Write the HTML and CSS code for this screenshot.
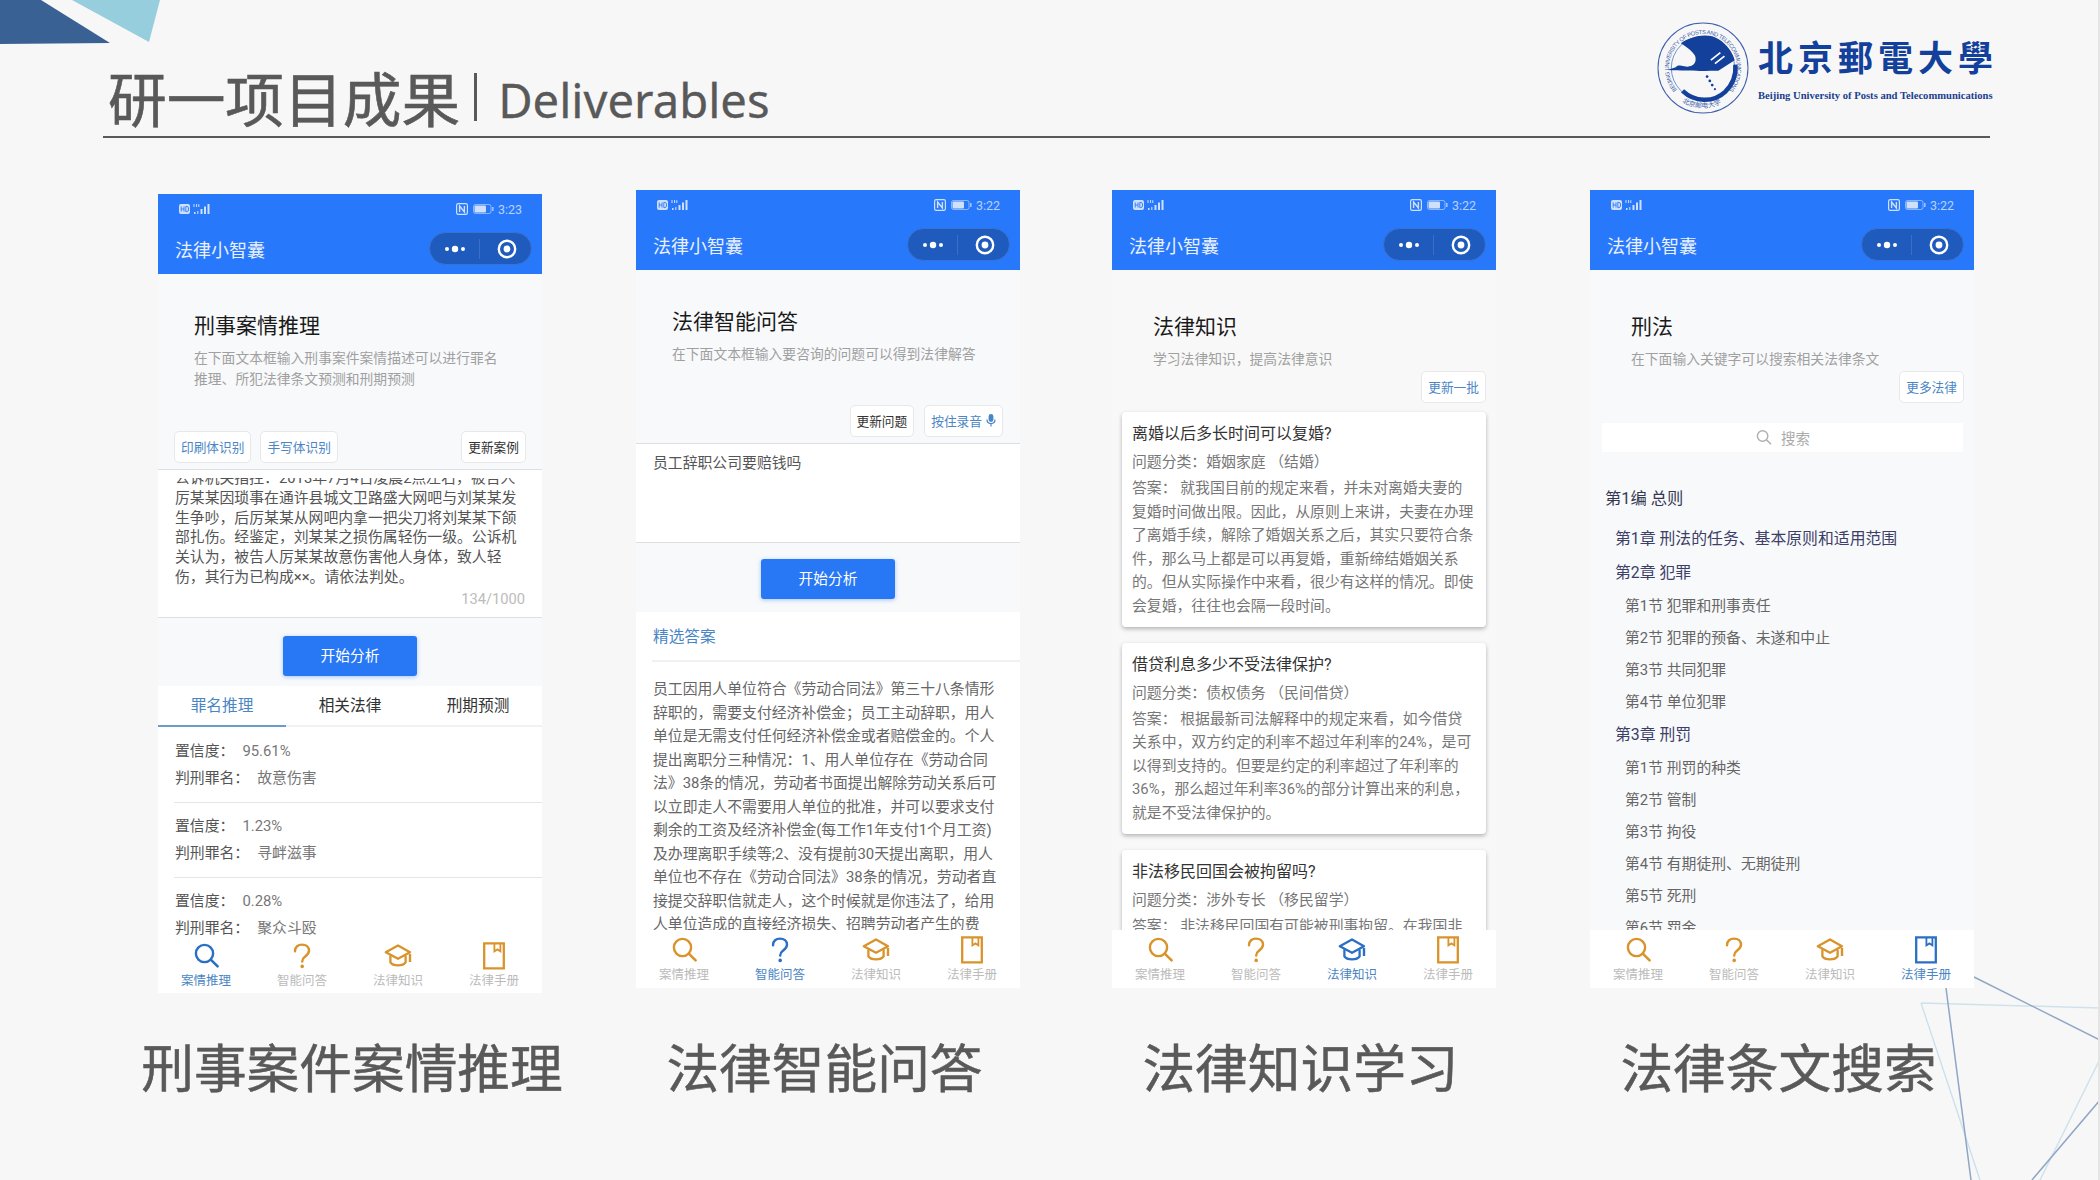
FILE: index.html
```html
<!DOCTYPE html>
<html lang="zh-CN">
<head>
<meta charset="UTF-8">
<meta name="viewport" content="width=device-width, initial-scale=1.0">
<title>研一项目成果 Deliverables</title>
<link rel="stylesheet" href="styles.css">
</head>
<body>
<svg class="icon-defs" xmlns="http://www.w3.org/2000/svg">
    <symbol id="i-search" viewBox="0 0 28 28">
        <circle cx="12.5" cy="11.5" r="8.6" fill="none" stroke="currentColor" stroke-width="2.4"/>
        <path d="M18.8 17.6 L25.6 24.4" fill="none" stroke="currentColor" stroke-width="2.6" stroke-linecap="round"/>
    </symbol>
    <symbol id="i-help" viewBox="0 0 28 28">
        <path d="M7 9.2 C7 4.8 10.2 2.6 14 2.6 C18 2.6 21 5 21 8.8 C21 12 18.8 13.4 16.6 15 C15 16.2 14.2 17.2 14.2 19.6" fill="none" stroke="currentColor" stroke-width="2.4" stroke-linecap="round"/>
        <circle cx="14.2" cy="24.4" r="1.8" fill="currentColor"/>
    </symbol>
    <symbol id="i-cap" viewBox="0 0 28 28">
        <path d="M14 3.4 L26 10.2 L14 16.8 L1.8 10.2 Z" fill="none" stroke="currentColor" stroke-width="2.3" stroke-linejoin="round"/>
        <path d="M6.4 13.4 V20.4 C9 24.4 19 24.4 21.6 20.4 V13.4" fill="none" stroke="currentColor" stroke-width="2.3"/>
        <path d="M26 12 V20" fill="none" stroke="currentColor" stroke-width="2.4"/>
    </symbol>
    <symbol id="i-book" viewBox="0 0 28 28">
        <path d="M4.2 1.4 H23.8 V26.4 H4.2 Z" fill="none" stroke="currentColor" stroke-width="2.3"/>
        <path d="M14.4 1.4 V9.4 L17.4 7.4 L20.4 9.4 V1.4" fill="none" stroke="currentColor" stroke-width="1.8"/>
    </symbol>
    <symbol id="i-status-left" viewBox="0 0 34 12">
        <rect x="0" y="1" width="11" height="10" rx="2" fill="#cfe0fd"/>
        <path d="M2.2 3.4 V8.6 M5 3.4 V8.6 M2.2 6 H5 M6.8 3.4 V8.6 H8 Q9.6 8.6 9.6 6 Q9.6 3.4 8 3.4 Z" fill="none" stroke="#2a78fb" stroke-width="0.9"/>
        <path d="M15 1 V4 M17.6 1 V4 M19.8 1.2 V4" stroke="#cfe0fd" stroke-width="1"/>
        <rect x="15" y="9" width="1.5" height="2" fill="#cfe0fd"/>
        <rect x="18" y="8" width="1.5" height="3" fill="#cfe0fd" opacity=".7"/>
        <rect x="21.5" y="6" width="2" height="5" fill="#cfe0fd"/>
        <rect x="25" y="3.5" width="2" height="7.5" fill="#cfe0fd"/>
        <rect x="28.5" y="1" width="2" height="10" fill="#cfe0fd"/>
    </symbol>
    <symbol id="i-nfc" viewBox="0 0 12 12">
        <rect x="0.6" y="0.6" width="10.8" height="10.8" rx="1.6" fill="none" stroke="#cfe0fd" stroke-width="1.2"/>
        <path d="M3.6 9 V3 L8.4 9 V3" fill="none" stroke="#cfe0fd" stroke-width="1.4"/>
    </symbol>
    <symbol id="i-battery" viewBox="0 0 21 10">
        <rect x="0.5" y="0.5" width="17.5" height="9" rx="2" fill="none" stroke="#cfe0fd" stroke-opacity=".6"/>
        <rect x="1.5" y="1.5" width="11.5" height="7" rx="1" fill="#cfe0fd"/>
        <rect x="19" y="3" width="1.6" height="4" fill="#cfe0fd" opacity=".7"/>
    </symbol>
    <symbol id="i-more" viewBox="0 0 22 8">
        <circle cx="3" cy="4" r="2" fill="#fff"/>
        <circle cx="11" cy="4" r="3.2" fill="#fff"/>
        <circle cx="19" cy="4" r="2" fill="#fff"/>
    </symbol>
    <symbol id="i-target" viewBox="0 0 20 20">
        <circle cx="10" cy="10" r="8.2" fill="none" stroke="#fff" stroke-width="2.4"/>
        <circle cx="10" cy="10" r="3.4" fill="#fff"/>
    </symbol>
    <symbol id="i-mic" viewBox="0 0 10 14">
        <rect x="2.6" y="1" width="4.8" height="8" rx="2.4" fill="currentColor"/>
        <path d="M1 6.6 C1 12 9 12 9 6.6 M5 11 V13.4" fill="none" stroke="currentColor" stroke-width="1.2"/>
    </symbol>
</svg>

<div class="slide">
    <div class="corner-dark"></div>
    <div class="corner-light"></div>
    <svg class="deco-lines" viewBox="0 0 2100 1180" xmlns="http://www.w3.org/2000/svg">
        <path d="M1921 1003 L2100 1008 M1921 1003 L1980 1180 M2100 1059 L2040 1180" fill="none" stroke="#cfe2ec" stroke-width="1.5"/>
        <path d="M1974 977 L2100 1040 M1946 988 L1971 1180 M2100 1100 L2032 1180" fill="none" stroke="#8fa6c6" stroke-width="1.5"/>
        <rect x="2098" y="0" width="2" height="1180" fill="#e4e4e4"/>
    </svg>

    <header class="head">
        <h1 class="head-title">研一项目成果<span class="head-bar"></span><span class="head-en">Deliverables</span></h1>
        <div class="logo">
            <svg class="logo-seal" viewBox="0 0 270 270" xmlns="http://www.w3.org/2000/svg">
                <defs>
                    <path id="seal-top" d="M58.4 199.3 A100 100 0 1 1 211.6 199.3"/>
                    <path id="seal-bottom" d="M69 232 A118 118 0 0 0 201 232"/>
                </defs>
                <circle cx="135" cy="135" r="132" fill="none" stroke="#3f5fae" stroke-width="3"/>
                <circle cx="135" cy="135" r="93" fill="none" stroke="#3f5fae" stroke-width="2"/>
                <text class="seal-text"><textPath href="#seal-top" textLength="454">BEIJING UNIVERSITY OF POSTS AND TELECOMMUNICATIONS</textPath></text>
                <text class="seal-text-zh"><textPath href="#seal-bottom" startOffset="6">北京邮电大学</textPath></text>
                <path d="M70 62 C100 42 150 30 180 50 C205 65 222 90 228 112 L180 143 C150 143 115 145 30 141 L55 133 C60 124 70 128 80 130 C105 135 118 120 112 100 C105 85 85 72 70 62 Z" fill="#12409a"/>
                <path d="M158 112 L186 90 M170 122 L198 100" stroke="#fff" stroke-width="5"/>
                <path d="M75 202 C110 235 165 238 200 205 C225 180 232 150 230 125" fill="none" stroke="#12409a" stroke-width="13"/>
                <circle cx="147" cy="160" r="4" fill="#12409a"/>
                <circle cx="155" cy="173" r="4" fill="#12409a"/>
                <circle cx="162" cy="185" r="4" fill="#12409a"/>
                <circle cx="170" cy="197" r="3" fill="#12409a"/>
            </svg>
            <div class="logo-text">
                <div class="logo-zh">北京郵電大學</div>
                <div class="logo-en">Beijing University of Posts and Telecommunications</div>
            </div>
        </div>
    </header>

    <main class="columns">

        <!-- 刑事案件 -->
        <section class="col col-case">
            <div class="phone phone-case">
                <div class="appbar">
                    <div class="statusbar">
                        <svg class="st-left"><use href="#i-status-left"/></svg>
                        <svg class="st-nfc"><use href="#i-nfc"/></svg>
                        <svg class="st-battery"><use href="#i-battery"/></svg>
                        <span class="st-time">3:23</span>
                    </div>
                    <div class="navbar">
                        <span class="nav-title">法律小智囊</span>
                        <div class="capsule">
                            <div class="capsule-half"><svg class="cap-more"><use href="#i-more"/></svg></div>
                            <div class="capsule-half capsule-right"><svg class="cap-target"><use href="#i-target"/></svg></div>
                        </div>
                    </div>
                </div>
                <div class="page">
                    <div class="intro">
                        <h2>刑事案情推理</h2>
                        <p>在下面文本框输入刑事案件案情描述可以进行罪名<br>推理、所犯法律条文预测和刑期预测</p>
                    </div>
                    <div class="toolbar">
                        <span class="chip chip-blue">印刷体识别</span>
                        <span class="chip chip-blue">手写体识别</span>
                        <span class="chip chip-end">更新案例</span>
                    </div>
                    <div class="textbox">
                        <div class="textbox-clip">
                            <p>公诉机关指控：2013年7月4日凌晨2点左右，被告人<br>厉某某因琐事在通许县城文卫路盛大网吧与刘某某发<br>生争吵，后厉某某从网吧内拿一把尖刀将刘某某下颌<br>部扎伤。经鉴定，刘某某之损伤属轻伤一级。公诉机<br>关认为，被告人厉某某故意伤害他人身体，致人轻<br>伤，其行为已构成××。请依法判处。</p>
                        </div>
                        <div class="counter">134/1000</div>
                    </div>
                    <div class="start-btn">开始分析</div>
                    <div class="result-panel">
                        <div class="tabs">
                            <span class="tab tab-on">罪名推理</span>
                            <span class="tab">相关法律</span>
                            <span class="tab">刑期预测</span>
                        </div>
                        <div class="result">
                            <div>置信度：<span class="val">95.61%</span></div>
                            <div>判刑罪名：<span class="val">故意伤害</span></div>
                        </div>
                        <div class="result">
                            <div>置信度：<span class="val">1.23%</span></div>
                            <div>判刑罪名：<span class="val">寻衅滋事</span></div>
                        </div>
                        <div class="result">
                            <div>置信度：<span class="val">0.28%</span></div>
                            <div>判刑罪名：<span class="val">聚众斗殴</span></div>
                        </div>
                    </div>
                </div>
                <nav class="tabbar">
                    <div class="tb-item tb-on"><svg class="tb-icon"><use href="#i-search"/></svg>案情推理</div>
                    <div class="tb-item"><svg class="tb-icon"><use href="#i-help"/></svg>智能问答</div>
                    <div class="tb-item"><svg class="tb-icon"><use href="#i-cap"/></svg>法律知识</div>
                    <div class="tb-item"><svg class="tb-icon"><use href="#i-book"/></svg>法律手册</div>
                </nav>
            </div>
            <div class="caption">刑事案件案情推理</div>
        </section>

        <!-- 智能问答 -->
        <section class="col col-qa">
            <div class="phone phone-qa">
                <div class="appbar">
                    <div class="statusbar">
                        <svg class="st-left"><use href="#i-status-left"/></svg>
                        <svg class="st-nfc"><use href="#i-nfc"/></svg>
                        <svg class="st-battery"><use href="#i-battery"/></svg>
                        <span class="st-time">3:22</span>
                    </div>
                    <div class="navbar">
                        <span class="nav-title">法律小智囊</span>
                        <div class="capsule">
                            <div class="capsule-half"><svg class="cap-more"><use href="#i-more"/></svg></div>
                            <div class="capsule-half capsule-right"><svg class="cap-target"><use href="#i-target"/></svg></div>
                        </div>
                    </div>
                </div>
                <div class="page">
                    <div class="intro">
                        <h2>法律智能问答</h2>
                        <p>在下面文本框输入要咨询的问题可以得到法律解答</p>
                    </div>
                    <div class="toolbar">
                        <span class="chip">更新问题</span>
                        <span class="chip chip-blue">按住录音<svg class="chip-mic"><use href="#i-mic"/></svg></span>
                    </div>
                    <div class="textbox">员工辞职公司要赔钱吗</div>
                    <div class="start-btn">开始分析</div>
                    <div class="answer-panel">
                        <div class="answer-head">精选答案</div>
                        <p class="answer-text">员工因用人单位符合《劳动合同法》第三十八条情形<br>辞职的，需要支付经济补偿金；员工主动辞职，用人<br>单位是无需支付任何经济补偿金或者赔偿金的。个人<br>提出离职分三种情况：1、用人单位存在《劳动合同<br>法》38条的情况，劳动者书面提出解除劳动关系后可<br>以立即走人不需要用人单位的批准，并可以要求支付<br>剩余的工资及经济补偿金(每工作1年支付1个月工资)<br>及办理离职手续等;2、没有提前30天提出离职，用人<br>单位也不存在《劳动合同法》38条的情况，劳动者直<br>接提交辞职信就走人，这个时候就是你违法了，给用<br>人单位造成的直接经济损失、招聘劳动者产生的费</p>
                    </div>
                </div>
                <nav class="tabbar">
                    <div class="tb-item"><svg class="tb-icon"><use href="#i-search"/></svg>案情推理</div>
                    <div class="tb-item tb-on"><svg class="tb-icon"><use href="#i-help"/></svg>智能问答</div>
                    <div class="tb-item"><svg class="tb-icon"><use href="#i-cap"/></svg>法律知识</div>
                    <div class="tb-item"><svg class="tb-icon"><use href="#i-book"/></svg>法律手册</div>
                </nav>
            </div>
            <div class="caption">法律智能问答</div>
        </section>

        <!-- 法律知识 -->
        <section class="col col-know">
            <div class="phone phone-know">
                <div class="appbar">
                    <div class="statusbar">
                        <svg class="st-left"><use href="#i-status-left"/></svg>
                        <svg class="st-nfc"><use href="#i-nfc"/></svg>
                        <svg class="st-battery"><use href="#i-battery"/></svg>
                        <span class="st-time">3:22</span>
                    </div>
                    <div class="navbar">
                        <span class="nav-title">法律小智囊</span>
                        <div class="capsule">
                            <div class="capsule-half"><svg class="cap-more"><use href="#i-more"/></svg></div>
                            <div class="capsule-half capsule-right"><svg class="cap-target"><use href="#i-target"/></svg></div>
                        </div>
                    </div>
                </div>
                <div class="page">
                    <div class="intro">
                        <h2>法律知识</h2>
                        <p>学习法律知识，提高法律意识</p>
                    </div>
                    <div class="toolbar">
                        <span class="chip chip-blue">更新一批</span>
                    </div>
                    <div class="card">
                        <h3>离婚以后多长时间可以复婚?</h3>
                        <div class="card-meta">问题分类：婚姻家庭 （结婚）</div>
                        <p>答案： 就我国目前的规定来看，并未对离婚夫妻的<br>复婚时间做出限。因此，从原则上来讲，夫妻在办理<br>了离婚手续，解除了婚姻关系之后，其实只要符合条<br>件，那么马上都是可以再复婚，重新缔结婚姻关系<br>的。但从实际操作中来看，很少有这样的情况。即使<br>会复婚，往往也会隔一段时间。</p>
                    </div>
                    <div class="card">
                        <h3>借贷利息多少不受法律保护?</h3>
                        <div class="card-meta">问题分类：债权债务 （民间借贷）</div>
                        <p>答案： 根据最新司法解释中的规定来看，如今借贷<br>关系中，双方约定的利率不超过年利率的24%，是可<br>以得到支持的。但要是约定的利率超过了年利率的<br>36%，那么超过年利率36%的部分计算出来的利息，<br>就是不受法律保护的。</p>
                    </div>
                    <div class="card">
                        <h3>非法移民回国会被拘留吗?</h3>
                        <div class="card-meta">问题分类：涉外专长 （移民留学）</div>
                        <p>答案： 非法移民回国有可能被刑事拘留。在我国非</p>
                    </div>
                </div>
                <nav class="tabbar">
                    <div class="tb-item"><svg class="tb-icon"><use href="#i-search"/></svg>案情推理</div>
                    <div class="tb-item"><svg class="tb-icon"><use href="#i-help"/></svg>智能问答</div>
                    <div class="tb-item tb-on"><svg class="tb-icon"><use href="#i-cap"/></svg>法律知识</div>
                    <div class="tb-item"><svg class="tb-icon"><use href="#i-book"/></svg>法律手册</div>
                </nav>
            </div>
            <div class="caption">法律知识学习</div>
        </section>

        <!-- 法律手册 -->
        <section class="col col-law">
            <div class="phone phone-law">
                <div class="appbar">
                    <div class="statusbar">
                        <svg class="st-left"><use href="#i-status-left"/></svg>
                        <svg class="st-nfc"><use href="#i-nfc"/></svg>
                        <svg class="st-battery"><use href="#i-battery"/></svg>
                        <span class="st-time">3:22</span>
                    </div>
                    <div class="navbar">
                        <span class="nav-title">法律小智囊</span>
                        <div class="capsule">
                            <div class="capsule-half"><svg class="cap-more"><use href="#i-more"/></svg></div>
                            <div class="capsule-half capsule-right"><svg class="cap-target"><use href="#i-target"/></svg></div>
                        </div>
                    </div>
                </div>
                <div class="page">
                    <div class="intro">
                        <h2>刑法</h2>
                        <p>在下面输入关键字可以搜索相关法律条文</p>
                    </div>
                    <div class="toolbar">
                        <span class="chip chip-blue">更多法律</span>
                    </div>
                    <div class="searchbox"><svg class="search-icon"><use href="#i-search"/></svg>搜索</div>
                    <div class="tree">
                        <div class="tree-part">第1编 总则</div>
                        <div class="tree-chapter">第1章 刑法的任务、基本原则和适用范围</div>
                        <div class="tree-chapter">第2章 犯罪</div>
                        <div class="tree-section">第1节 犯罪和刑事责任</div>
                        <div class="tree-section">第2节 犯罪的预备、未遂和中止</div>
                        <div class="tree-section">第3节 共同犯罪</div>
                        <div class="tree-section">第4节 单位犯罪</div>
                        <div class="tree-chapter">第3章 刑罚</div>
                        <div class="tree-section">第1节 刑罚的种类</div>
                        <div class="tree-section">第2节 管制</div>
                        <div class="tree-section">第3节 拘役</div>
                        <div class="tree-section">第4节 有期徒刑、无期徒刑</div>
                        <div class="tree-section">第5节 死刑</div>
                        <div class="tree-section">第6节 罚金</div>
                    </div>
                </div>
                <nav class="tabbar">
                    <div class="tb-item"><svg class="tb-icon"><use href="#i-search"/></svg>案情推理</div>
                    <div class="tb-item"><svg class="tb-icon"><use href="#i-help"/></svg>智能问答</div>
                    <div class="tb-item"><svg class="tb-icon"><use href="#i-cap"/></svg>法律知识</div>
                    <div class="tb-item tb-on"><svg class="tb-icon"><use href="#i-book"/></svg>法律手册</div>
                </nav>
            </div>
            <div class="caption">法律条文搜索</div>
        </section>

    </main>
</div>
</body>
</html>
```

FILE: styles.css
```css
* {
    box-sizing: border-box;
}
body {
    margin: 0;
    background-color: #f7f7f7;
    font-family: Roboto, "Noto Sans CJK SC", sans-serif;
}
h1, h2, h3, p {
    margin: 0;
    font-weight: 400;
}
.icon-defs {
    display: none;
}
.slide {
    position: relative;
    width: 2100px;
    height: 1180px;
    overflow: hidden;
    background-color: #f7f7f7;
}

/* corner and background decoration */
.corner-dark {
    position: absolute;
    left: 0;
    top: 0;
    width: 110px;
    height: 44px;
    background-color: #3a6194;
    clip-path: polygon(0 0, 41px 0, 110px 43px, 0 44px);
}
.corner-light {
    position: absolute;
    left: 72px;
    top: 0;
    width: 88px;
    height: 42px;
    background-color: #97cede;
    clip-path: polygon(0 0, 88px 0, 77px 42px);
}
.deco-lines {
    position: absolute;
    left: 0;
    top: 0;
    width: 2100px;
    height: 1180px;
}

/* slide header */
.head {
    position: relative;
    display: flex;
    justify-content: space-between;
    width: 1887px;
    height: 138px;
    margin-left: 103px;
    border-bottom: 2px solid #595959;
}
.head-title {
    display: flex;
    align-items: center;
    height: 68px;
    margin-top: 63px;
    padding-left: 5px;
    font-family: "Noto Sans CJK SC", sans-serif;
    font-size: 58.7px;
    line-height: 68px;
    -webkit-text-stroke: 0.6px #595959;
    color: #595959;
}
.head-bar {
    width: 3px;
    height: 48px;
    margin: 0 21px 0 14px;
    background-color: #595959;
}
.head-en {
    padding-top: 6px;
    font-family: "Noto Sans", sans-serif;
    font-size: 47.2px;
    -webkit-text-stroke: 0.3px #595959;
    color: #595959;
}
.logo {
    display: flex;
    margin-top: 22px;
    margin-right: -4px;
    height: 92px;
}
.logo-seal {
    width: 92px;
    height: 92px;
    margin-right: 9px;
}
.seal-text {
    font-family: "Liberation Sans", sans-serif;
    font-size: 17px;
    fill: #3f5fae;
}
.seal-text-zh {
    font-family: "Noto Sans CJK SC", sans-serif;
    font-size: 20px;
    fill: #3f5fae;
}
.logo-text {
    width: 236px;
}
.logo-zh {
    height: 58px;
    margin-top: 8px;
    font-family: "Noto Sans CJK TC", sans-serif;
    font-size: 35px;
    font-weight: 700;
    line-height: 52px;
    letter-spacing: 5px;
    white-space: nowrap;
    color: #12409a;
}
.logo-en {
    font-family: "Liberation Serif", serif;
    font-size: 10.6px;
    font-weight: 700;
    line-height: 16px;
    white-space: nowrap;
    color: #1a3f8f;
}

/* four columns */
.columns {
    position: relative;
    display: flex;
    margin-top: 52px;
}
.col {
    flex: none;
    width: 384px;
}
.col-case {
    margin-left: 158px;
    padding-top: 4px;
}
.col-qa {
    margin-left: 94px;
}
.col-know {
    margin-left: 92px;
}
.col-law {
    margin-left: 94px;
}
.caption {
    display: flex;
    justify-content: center;
    height: 80px;
    margin-top: 37px;
    padding-right: 7px;
    font-family: "Noto Sans CJK SC", sans-serif;
    font-size: 52.7px;
    line-height: 80px;
    white-space: nowrap;
    -webkit-text-stroke: 0.5px #595959;
    color: #595959;
}
.col-case .caption {
    margin-top: 32px;
    padding-right: 0;
    padding-left: 4px;
}

/* phone */
.phone {
    display: flex;
    flex-direction: column;
    height: 798px;
    background-color: #f8f9fb;
    font-size: 14.85px;
}
.phone-case {
    height: 799px;
}
.phone-know {
    background-color: #f8f8f8;
}
.appbar {
    flex: none;
    height: 80px;
    background-color: #2878fb;
}
.statusbar {
    display: flex;
    align-items: center;
    height: 30px;
    padding: 0 20px 0 21px;
}
.st-left {
    width: 34px;
    height: 12px;
    margin-right: auto;
}
.st-nfc {
    width: 12px;
    height: 12px;
    margin-right: 5px;
}
.st-battery {
    width: 21px;
    height: 10px;
    margin-right: 4px;
}
.st-time {
    font-size: 12.5px;
    color: #b9d2fc;
}
.navbar {
    display: flex;
    align-items: center;
    justify-content: space-between;
    height: 50px;
    padding: 0 10px 0 17px;
}
.nav-title {
    font-size: 18px;
    color: #e8f0fe;
}
.capsule {
    display: flex;
    align-items: center;
    width: 103px;
    height: 33px;
    margin-top: -1px;
    border: 1px solid #3a72d4;
    border-radius: 17px;
    background-color: #1f5bbd;
}
.capsule-half {
    display: flex;
    align-items: center;
    justify-content: center;
    flex: 1;
    height: 20px;
}
.capsule-right {
    padding-left: 2px;
    border-left: 1px solid #3a6fc6;
}
.cap-more {
    width: 22px;
    height: 8px;
}
.cap-target {
    width: 20px;
    height: 20px;
}

.page {
    flex: 1;
    display: flex;
    flex-direction: column;
    min-height: 0;
    overflow: hidden;
}
.intro {
    flex: none;
    margin: 37px 0 0 36px;
}
.intro h2 {
    font-size: 21px;
    line-height: 30px;
    color: #1a1a1a;
}
.intro p {
    margin-top: 7px;
    font-size: 13.8px;
    line-height: 21px;
    color: #a0a0a0;
}
.toolbar {
    flex: none;
    display: flex;
    justify-content: flex-end;
    gap: 10px;
    height: 32px;
    margin-top: 41px;
    margin-bottom: 1px;
    padding: 0 16px;
}
.chip {
    display: flex;
    align-items: center;
    height: 32px;
    padding: 0 6px 2px;
    border: 1px solid #e8e8ea;
    border-radius: 5px;
    background-color: #fff;
    font-size: 12.7px;
    white-space: nowrap;
    color: #333;
}
.chip-blue {
    color: #4a86c5;
}
.chip-mic {
    width: 10px;
    height: 14px;
    margin-left: 4px;
}
.phone-case .toolbar {
    justify-content: flex-start;
    gap: 9px;
}
.chip-end {
    margin-left: auto;
}
.textbox {
    flex: none;
    margin-top: 5px;
    border-top: 1px solid #dddfe2;
    border-bottom: 1px solid #dddfe2;
    background-color: #fff;
    color: #555;
}
.phone-case .textbox {
    height: 149px;
    padding: 8px 17px 0 17px;
}
.textbox-clip {
    height: 110px;
    overflow: hidden;
}
.textbox-clip p {
    margin-top: -9px;
    line-height: 19.8px;
    white-space: nowrap;
}
.counter {
    height: 20px;
    padding-top: 1px;
    font-size: 14.7px;
    line-height: 20px;
    text-align: right;
    color: #bbb;
}
.start-btn {
    flex: none;
    width: 134px;
    height: 40px;
    margin: 18px auto 0;
    border-radius: 3px;
    background-color: #2878f6;
    box-shadow: 0 1px 4px rgba(40, 120, 246, 0.4);
    font-size: 14.7px;
    line-height: 40px;
    text-align: center;
    color: #fff;
}

/* result panel of the first screen */
.result-panel {
    flex: 1;
    margin-top: 10px;
    background-color: #fff;
}
.tabs {
    display: flex;
    height: 41px;
    margin-bottom: 1px;
    border-bottom: 2px solid #f0f1f2;
}
.tab {
    flex: 1;
    height: 41px;
    font-size: 15.7px;
    line-height: 40px;
    text-align: center;
    color: #333;
}
.tab-on {
    border-bottom: 2px solid #6a9ccb;
    color: #4a86c5;
}
.result {
    margin-left: 16px;
    padding: 10px 0 10px 1px;
    border-bottom: 1px solid #e3e4e6;
    line-height: 27px;
    color: #555;
}
.result:last-child {
    border-bottom: none;
}
.val {
    margin-left: 8px;
    color: #777;
}

/* second screen */
.phone-qa .toolbar {
    margin-top: 40px;
    padding-right: 17px;
}
.phone-qa .textbox {
    height: 100px;
    padding: 9px 17px 0;
    line-height: 20px;
}
.phone-qa .start-btn {
    margin-top: 16px;
}
.answer-panel {
    flex: 1;
    margin-top: 13px;
    background-color: #fff;
}
.answer-head {
    height: 50px;
    margin-left: 16px;
    padding-left: 1px;
    border-bottom: 2px solid #f0f1f2;
    font-size: 15.7px;
    line-height: 50px;
    color: #4a86c5;
}
.answer-text {
    padding: 16px 0 0 17px;
    line-height: 23.5px;
    white-space: nowrap;
    color: #666;
}

/* third and fourth screen */
.phone-know .intro,
.phone-law .intro {
    margin: 42px 0 0 41px;
}
.phone-know .intro p,
.phone-law .intro p {
    margin-top: 6.5px;
}
.phone-know .toolbar,
.phone-law .toolbar {
    margin-top: 1.5px;
    padding-right: 10px;
}
.card {
    flex: none;
    margin: 0 10px 15.5px;
    padding: 7px 10px 9px;
    border-radius: 4px;
    background-color: #fff;
    box-shadow: 0 2px 4px rgba(0, 0, 0, 0.28);
    color: #777;
}
.phone-know .toolbar + .card {
    margin-top: 8px;
}
.card h3 {
    font-size: 16px;
    line-height: 30px;
    color: #333;
}
.card-meta {
    margin-top: 1px;
    line-height: 24px;
}
.card p {
    margin-top: 3px;
    line-height: 23.5px;
    white-space: nowrap;
}

.searchbox {
    flex: none;
    display: flex;
    align-items: center;
    justify-content: center;
    height: 29px;
    margin: 19px 11px 0 12px;
    background-color: #fff;
    font-size: 14.5px;
    color: #aaa;
}
.search-icon {
    width: 17px;
    height: 17px;
    margin-right: 9px;
    color: #b0b0b0;
}
.tree {
    flex: none;
    margin-top: 31px;
    padding-left: 15px;
}
.tree-part {
    margin-bottom: 7px;
    font-size: 16.3px;
    line-height: 32px;
    color: #333850;
}
.tree-chapter {
    margin-bottom: 1px;
    padding-top: 1px;
    padding-left: 10px;
    font-size: 15.85px;
    line-height: 32px;
    color: #3c4068;
}
.tree-section {
    padding-left: 20px;
    line-height: 32px;
    color: #666;
}

/* bottom tab bar */
.tabbar {
    flex: none;
    display: flex;
    height: 58px;
    padding-top: 6px;
    background-color: #fff;
}
.phone-case .tabbar {
    padding-top: 7px;
}
.tb-item {
    display: flex;
    flex-direction: column;
    align-items: center;
    flex: 1;
    font-size: 12.5px;
    line-height: 20px;
    color: #bbb;
}
.tb-icon {
    width: 28px;
    height: 28px;
    margin-bottom: 1px;
    color: #d9932b;
}
.tb-on {
    color: #4a86c5;
}
.tb-on .tb-icon {
    color: #2a6fc4;
}
```
